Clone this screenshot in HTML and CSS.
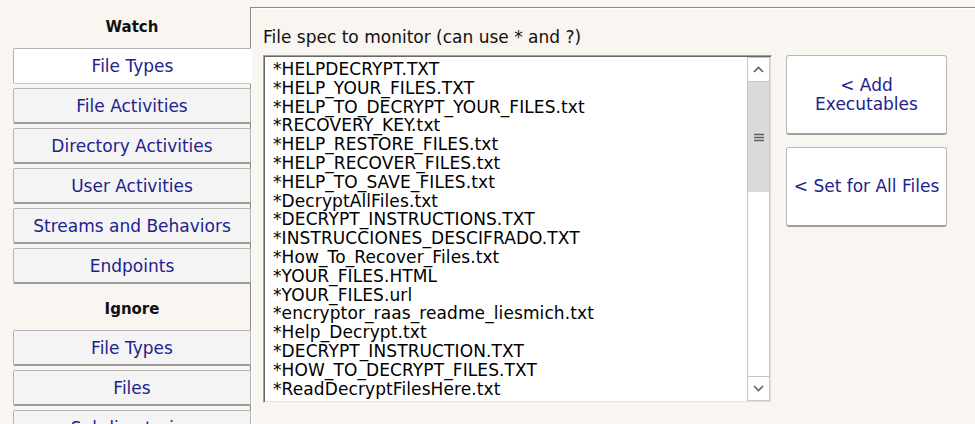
FILE: index.html
```html
<!DOCTYPE html>
<html lang="en">
<head>
    <meta charset="UTF-8">
    <title>Watch Settings</title>
    <link rel="stylesheet" href="styles.css">
</head>
<body>
    <div class="app">
        <div class="sidebar">
            <div class="group-title">Watch</div>
            <button class="nav-btn selected">File Types</button>
            <button class="nav-btn">File Activities</button>
            <button class="nav-btn">Directory Activities</button>
            <button class="nav-btn">User Activities</button>
            <button class="nav-btn">Streams and Behaviors</button>
            <button class="nav-btn">Endpoints</button>
            <div class="group-title">Ignore</div>
            <button class="nav-btn">File Types</button>
            <button class="nav-btn">Files</button>
            <button class="nav-btn">Subdirectories</button>
        </div>

        <div class="panel">
            <div class="spec-label">File spec to monitor (can use * and ?)</div>
            <div class="spec-row">
                <div class="listbox">
                    <div class="items">
                        <div>*HELPDECRYPT.TXT</div>
                        <div>*HELP_YOUR_FILES.TXT</div>
                        <div>*HELP_TO_DECRYPT_YOUR_FILES.txt</div>
                        <div>*RECOVERY_KEY.txt</div>
                        <div>*HELP_RESTORE_FILES.txt</div>
                        <div>*HELP_RECOVER_FILES.txt</div>
                        <div>*HELP_TO_SAVE_FILES.txt</div>
                        <div>*DecryptAllFiles.txt</div>
                        <div>*DECRYPT_INSTRUCTIONS.TXT</div>
                        <div>*INSTRUCCIONES_DESCIFRADO.TXT</div>
                        <div>*How_To_Recover_Files.txt</div>
                        <div>*YOUR_FILES.HTML</div>
                        <div>*YOUR_FILES.url</div>
                        <div>*encryptor_raas_readme_liesmich.txt</div>
                        <div>*Help_Decrypt.txt</div>
                        <div>*DECRYPT_INSTRUCTION.TXT</div>
                        <div>*HOW_TO_DECRYPT_FILES.TXT</div>
                        <div>*ReadDecryptFilesHere.txt</div>
                    </div>
                    <div class="scrollbar">
                        <div class="arrow">
                            <svg width="11" height="7" viewBox="0 0 11 7"><path d="M1 6 L5.5 1.5 L10 6" fill="none" stroke="#606060" stroke-width="1.6"/></svg>
                        </div>
                        <div class="thumb">
                            <svg width="10" height="9" viewBox="0 0 10 9"><path d="M0 1.5H10M0 4.5H10M0 7.5H10" stroke="#606060" stroke-width="1.4"/></svg>
                        </div>
                        <div class="track"></div>
                        <div class="arrow">
                            <svg width="11" height="7" viewBox="0 0 11 7"><path d="M1 1 L5.5 5.5 L10 1" fill="none" stroke="#606060" stroke-width="1.6"/></svg>
                        </div>
                    </div>
                </div>
                <div class="actions">
                    <button class="action-btn">&lt; Add<br>Executables</button>
                    <button class="action-btn">&lt; Set for All Files</button>
                </div>
            </div>
        </div>
    </div>
</body>
</html>
```

FILE: styles.css
```css
body {
    margin: 0;
    background-color: #f9f5f0;
    font-family: "DejaVu Sans", Verdana, sans-serif;
    font-size: 17px;
    overflow: hidden;
}
.app {
    display: flex;
    align-items: flex-start;
    height: 424px;
    overflow: hidden;
}
.sidebar {
    width: 238px;
    margin-left: 13px;
    margin-right: -1px;
    padding-top: 6px;
    display: flex;
    flex-direction: column;
    position: relative;
    z-index: 1;
}
.group-title {
    height: 42px;
    display: flex;
    align-items: center;
    justify-content: center;
    font-weight: bold;
    font-size: 15px;
    color: #111;
}
.nav-btn {
    height: 36px;
    margin-bottom: 4px;
    padding: 0;
    font-family: inherit;
    font-size: 17px;
    color: #22228e;
    background-color: #f4f4f4;
    border: 1px solid #b4b4b4;
    border-bottom: 2px solid #9a9a9a;
    border-radius: 2px;
    text-align: center;
}
.nav-btn.selected {
    background-color: #fff;
    border-right: none;
    border-bottom: 1px solid #c8c8c8;
    border-radius: 2px 0 0 2px;
}
.panel {
    flex: 1;
    margin-top: 7px;
    height: 430px;
    border-left: 1px solid #8a8a8a;
    border-top: 1px solid #8a8a8a;
    box-shadow: inset 1px 1px 0 #ffffff;
    padding: 19px 0 0 12px;
}
.spec-label {
    line-height: 20px;
    color: #111;
}
.spec-row {
    display: flex;
    align-items: flex-start;
    gap: 14px;
    margin-top: 8px;
}
.listbox {
    width: 509px;
    height: 348px;
    box-sizing: border-box;
    display: flex;
    background-color: #fff;
    border: 1px solid;
    border-color: #a0a0a0 #f2f2f2 #f2f2f2 #a0a0a0;
    box-shadow: inset 1px 1px 0 #696969, inset -1px -1px 0 #e3e3e3;
    padding: 1px;
}
.items {
    flex: 1;
    padding: 3px 0 0 8px;
    line-height: 18.8px;
    letter-spacing: 0.1px;
    color: #000;
    white-space: nowrap;
    overflow: hidden;
}
.scrollbar {
    width: 23px;
    display: flex;
    flex-direction: column;
    border-left: 1px solid #c6c6c6;
    border-right: 1px solid #c6c6c6;
    box-sizing: border-box;
}
.arrow {
    height: 23px;
    display: flex;
    align-items: center;
    justify-content: center;
    background-color: #fff;
    border-top: 1px solid #c6c6c6;
    border-bottom: 1px solid #c6c6c6;
}
.thumb {
    height: 110px;
    background-color: #dadada;
    display: flex;
    align-items: center;
    justify-content: center;
}
.track {
    flex: 1;
    background-color: #fff;
}
.actions {
    display: flex;
    flex-direction: column;
    gap: 12px;
}
.action-btn {
    width: 161px;
    height: 80px;
    padding: 0;
    font-family: inherit;
    font-size: 17px;
    line-height: 19px;
    color: #22228e;
    background-color: #fff;
    border: 1px solid #b8b8b8;
    border-bottom: 2px solid #a0a0a0;
    border-radius: 3px;
}
```
